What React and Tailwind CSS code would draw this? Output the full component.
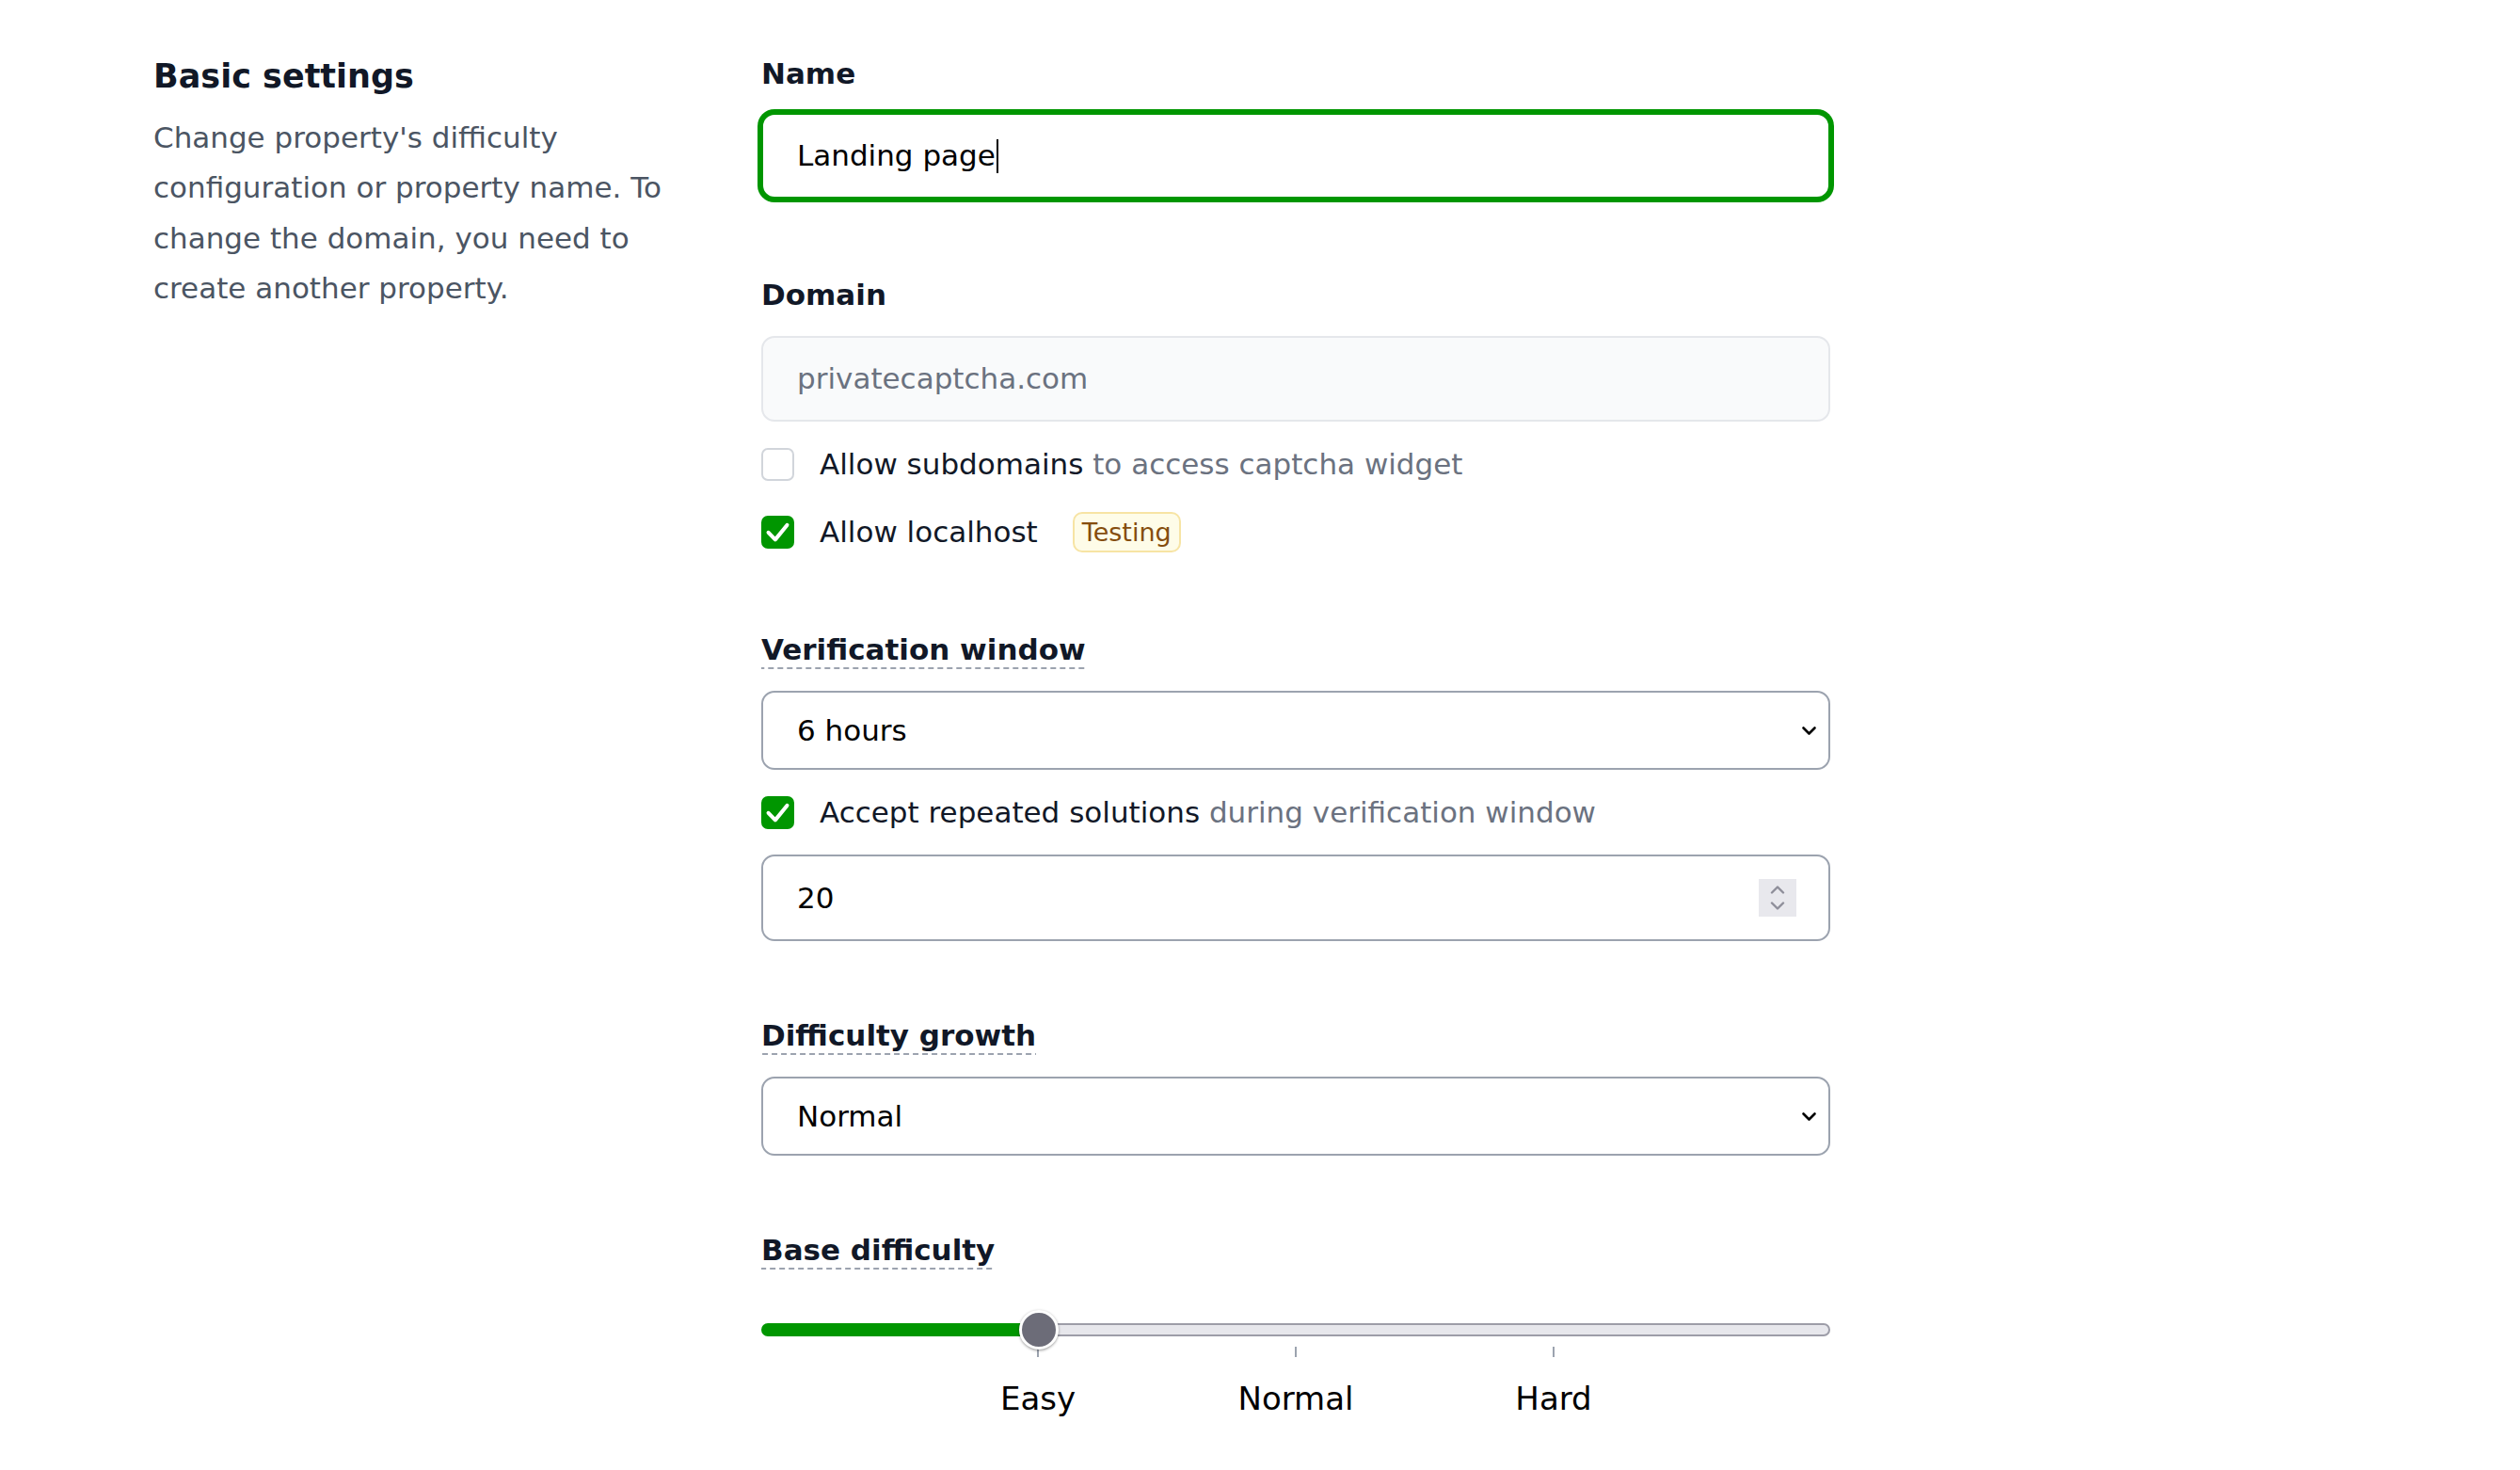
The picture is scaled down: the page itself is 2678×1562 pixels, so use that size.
import clsx from 'clsx'

function FieldLabel({ children, dashed }) {
  return (
    <div
      className={clsx(
        'w-fit text-[31px] leading-[38px] font-bold text-[#111827]',
        dashed &&
          'bg-[linear-gradient(to_right,#9ca3af_62%,transparent_62%)] bg-[length:10px_2px] bg-bottom bg-repeat-x pb-[2px]'
      )}
    >
      {children}
    </div>
  )
}

function Checkbox({ checked }) {
  if (!checked) {
    return <span className="h-[35px] w-[35px] shrink-0 rounded-[7px] border-2 border-[#d1d5db] bg-white" />
  }
  return (
    <span className="flex h-[35px] w-[35px] shrink-0 items-center justify-center rounded-[7px] bg-[#009600]">
      <svg viewBox="0 0 24 24" className="h-[35px] w-[35px]" fill="none" stroke="white" strokeWidth="2.8" strokeLinecap="round" strokeLinejoin="round">
        <path d="M5.2 12.2l5 5.2 8.6-10.6" />
      </svg>
    </span>
  )
}

function SelectBox({ value, className }) {
  return (
    <div className={clsx('flex h-[84px] items-center justify-between rounded-[14px] border-2 border-[#9ca3af] bg-white pl-[36px] pr-[12px] text-[31px] text-black', className)}>
      <span>{value}</span>
      <svg width="17" height="11" viewBox="0 0 17 11" fill="none" stroke="black" strokeWidth="2.6" strokeLinecap="round" strokeLinejoin="round">
        <path d="M2.5 2.5l6 6 6-6" />
      </svg>
    </div>
  )
}

export default function App() {
  return (
    <div className="min-h-screen bg-white font-['DejaVu_Sans',sans-serif] text-[#111827]">
      <div className="flex pl-[163px] pt-[59px]">
        <div className="w-[580px] shrink-0">
          <h2 className="text-[35px] leading-[44px] font-bold text-[#111827]">Basic settings</h2>
          <p className="mt-[17px] text-[31px] leading-[53.3px] text-[#4b5563]">
            Change property's difficulty configuration or property name. To change the domain, you need to create another property.
          </p>
        </div>

        <div className="ml-[66px] w-[1136px] shrink-0">
          <FieldLabel>Name</FieldLabel>
          <div className="mt-[23px] flex h-[91px] items-center rounded-[14px] border-2 border-[#009600] bg-white pl-[36px] text-[31px] text-black ring-4 ring-[#009600]">
            <span>Landing page</span>
            <span className="ml-[1px] inline-block h-[36px] w-[2px] bg-black" />
          </div>

          <div className="mt-[83px]">
            <FieldLabel>Domain</FieldLabel>
          </div>
          <div className="mt-[25px] flex h-[91px] items-center rounded-[14px] border-2 border-[#e5e7eb] bg-[#f9fafb] pl-[36px] text-[31px] text-[#6b7280]">
            privatecaptcha.com
          </div>

          <div className="mt-[25px] flex h-[40px] items-center gap-[27px] text-[31px] leading-[40px]">
            <Checkbox />
            <span>
              <span className="text-[#111827]">Allow subdomains</span>{' '}
              <span className="text-[#6b7280]">to access captcha widget</span>
            </span>
          </div>

          <div className="mt-[30px] flex h-[44px] items-center text-[31px] leading-[40px]">
            <Checkbox checked />
            <span className="ml-[27px]">Allow localhost</span>
            <span className="ml-[37px] flex h-[43px] items-center rounded-[10px] border-2 border-[#f7e4a4] bg-[#fefce8] px-[8px] text-[27px] leading-none text-[#854d0e]">
              Testing
            </span>
          </div>

          <div className="mt-[84px]">
            <FieldLabel dashed>Verification window</FieldLabel>
          </div>
          <SelectBox value="6 hours" className="mt-[23px]" />

          <div className="mt-[25px] flex h-[40px] items-center gap-[27px] text-[31px] leading-[40px]">
            <Checkbox checked />
            <span>
              <span className="text-[#111827]">Accept repeated solutions</span>{' '}
              <span className="text-[#6b7280]">during verification window</span>
            </span>
          </div>

          <div className="mt-[25px] flex h-[92px] items-center justify-between rounded-[14px] border-2 border-[#9ca3af] bg-white pl-[36px] pr-[34px] text-[31px] text-black">
            <span>20</span>
            <span className="flex h-[40px] w-[40px] flex-col items-center justify-center gap-[8px] bg-[#e8e8ed]">
              <svg width="16" height="9" viewBox="0 0 16 9" fill="none" stroke="#8e8e9a" strokeWidth="2.4" strokeLinecap="round" strokeLinejoin="round">
                <path d="M2 7.5l6-6 6 6" />
              </svg>
              <svg width="16" height="9" viewBox="0 0 16 9" fill="none" stroke="#8e8e9a" strokeWidth="2.4" strokeLinecap="round" strokeLinejoin="round">
                <path d="M2 1.5l6 6 6-6" />
              </svg>
            </span>
          </div>

          <div className="mt-[81px]">
            <FieldLabel dashed>Difficulty growth</FieldLabel>
          </div>
          <SelectBox value="Normal" className="mt-[23px]" />

          <div className="mt-[81px]">
            <FieldLabel dashed>Base difficulty</FieldLabel>
          </div>

          {/* slider */}
          <div className="relative mt-[43px] flex h-[42px] items-center">
            <div className="flex h-[14px] w-full">
              <div className="h-full w-[295px] rounded-l-full bg-[#009600]" />
              <div className="h-full flex-1 rounded-r-full border-y-2 border-r-2 border-[#9d9da8] bg-[#e7e7ec]" />
            </div>
            <div className="absolute left-[274px] top-0 h-[42px] w-[42px] rounded-full border-[3px] border-white bg-[#6c6c78] shadow-[0_1px_3px_rgba(0,0,0,0.4)]" />
          </div>
          <div className="mt-[-3px] grid h-[11px] grid-cols-8 px-[20px]">
            <div className="col-span-2 col-start-2 flex justify-center">
              <span className="h-full w-[2px] bg-[#9ca3af]" />
            </div>
            <div className="col-span-2 col-start-4 flex justify-center">
              <span className="h-full w-[2px] bg-[#9ca3af]" />
            </div>
            <div className="col-span-2 col-start-6 flex justify-center">
              <span className="h-full w-[2px] bg-[#9ca3af]" />
            </div>
          </div>
          <div className="mt-[24px] grid grid-cols-8 px-[20px] text-[34px] leading-[40px] text-black">
            <div className="col-span-2 col-start-2 text-center">Easy</div>
            <div className="col-span-2 col-start-4 text-center">Normal</div>
            <div className="col-span-2 col-start-6 text-center">Hard</div>
          </div>
        </div>
      </div>
    </div>
  )
}
